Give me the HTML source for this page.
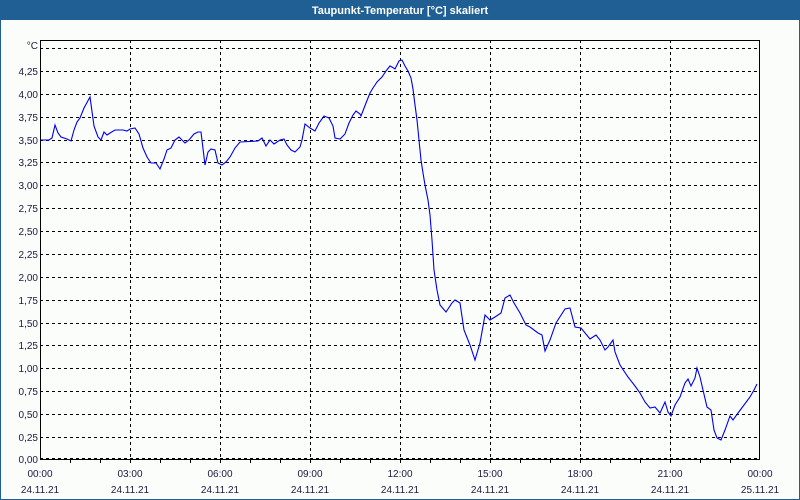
<!DOCTYPE html>
<html><head><meta charset="utf-8"><style>
body{margin:0;width:800px;height:500px;overflow:hidden;background:#fbfdfb;font-family:"Liberation Sans","DejaVu Sans",sans-serif}
</style></head><body>
<svg width="800" height="500" xmlns="http://www.w3.org/2000/svg" style="position:absolute;left:0;top:0">
<rect x="0" y="0" width="800" height="500" fill="#fbfdfb"/>
<rect x="0" y="0" width="800" height="20" fill="#1f5f94"/>
<rect x="0.5" y="0.5" width="799" height="499" fill="none" stroke="#1f5f94"/>
<text x="400" y="14" fill="#fff" font-size="11" font-weight="bold" text-anchor="middle">Taupunkt-Temperatur [°C] skaliert</text>
<g stroke="#000" stroke-dasharray="3,3" stroke-width="1">
<line x1="40" x2="760" y1="48.5" y2="48.5"/><line x1="40" x2="760" y1="71.5" y2="71.5"/><line x1="40" x2="760" y1="94.5" y2="94.5"/><line x1="40" x2="760" y1="117.5" y2="117.5"/><line x1="40" x2="760" y1="140.5" y2="140.5"/><line x1="40" x2="760" y1="162.5" y2="162.5"/><line x1="40" x2="760" y1="185.5" y2="185.5"/><line x1="40" x2="760" y1="208.5" y2="208.5"/><line x1="40" x2="760" y1="231.5" y2="231.5"/><line x1="40" x2="760" y1="254.5" y2="254.5"/><line x1="40" x2="760" y1="277.5" y2="277.5"/><line x1="40" x2="760" y1="300.5" y2="300.5"/><line x1="40" x2="760" y1="323.5" y2="323.5"/><line x1="40" x2="760" y1="345.5" y2="345.5"/><line x1="40" x2="760" y1="368.5" y2="368.5"/><line x1="40" x2="760" y1="391.5" y2="391.5"/><line x1="40" x2="760" y1="414.5" y2="414.5"/><line x1="40" x2="760" y1="437.5" y2="437.5"/><line x1="40" x2="760" y1="458.5" y2="458.5"/>
<line y1="40" y2="460" x1="130.5" x2="130.5"/><line y1="40" y2="460" x1="220.5" x2="220.5"/><line y1="40" y2="460" x1="310.5" x2="310.5"/><line y1="40" y2="460" x1="400.5" x2="400.5"/><line y1="40" y2="460" x1="490.5" x2="490.5"/><line y1="40" y2="460" x1="580.5" x2="580.5"/><line y1="40" y2="460" x1="670.5" x2="670.5"/>
</g>
<rect x="40.5" y="40.5" width="719" height="419" fill="none" stroke="#000"/>
<g stroke="#000">
<path d="M70.5 460v3M100.5 460v3M130.5 460v3M160.5 460v3M190.5 460v3M220.5 460v3M250.5 460v3M280.5 460v3M310.5 460v3M340.5 460v3M370.5 460v3M400.5 460v3M430.5 460v3M460.5 460v3M490.5 460v3M520.5 460v3M550.5 460v3M580.5 460v3M610.5 460v3M640.5 460v3M670.5 460v3M700.5 460v3M730.5 460v3"/>
</g>
<polyline fill="none" stroke="#0000ee" stroke-width="1.1" points="41,140 49,140 52,138 55,125 58,133 61,137 67,139 71,141 74,130 77,122 80,118 84,108 90,97 94,126 98,137 101,140 104,132 107,135 110,133 115,130 123,130 127,131 130,129 135,128 139,134 143,148 147,157 151,163 156,163 160,169 164,159 167,150 171,148 175,140 179,137 182,140 185,143 189,140 194,134 198,132 201,132 205,165 208,152 211,149 215,150 218,163 222,165 226,162 230,157 235,148 240,142 258,141 262,138 266,146 270,140 274,144 280,140 284,139 287,145 291,150 295,152 300,147 302,140 305,124 310,128 315,131 319,123 324,116 329,118 333,126 335,138 340,139 345,134 349,123 353,115 356,111 360,114 361,116 366,103 370,93 373,88 377,82 382,77 386,71 390,66 392,67 395,69 399,61 402,60 405,66 408,71 411,78 413,89 415,105 417,120 419,140 421,160 423,173 425,185 428,200 430,215 432,240 434,270 437,290 440,305 446,312 452,303 455,300 460,303 464,330 470,345 475,360 480,343 485,315 490,320 495,317 501,313 505,298 510,295 514,303 520,313 526,325 530,327 538,333 542,335 545,351 550,340 556,323 565,309 570,308 575,327 581,328 590,339 596,335 600,340 605,350 608,347 613,340 615,352 620,365 628,377 635,386 640,393 645,402 650,408 655,407 660,413 665,402 668,412 671,416 675,405 680,397 685,383 688,379 691,386 695,378 697,368 700,377 703,390 707,407 711,410 714,430 717,438 721,440 725,430 730,416 733,420 738,413 744,405 750,397 754,390 757,384"/>
<g font-size="10" fill="#1a1a40" text-anchor="end">
<text x="38" y="49">°C</text>
<text x="38" y="75">4,25</text><text x="38" y="98">4,00</text><text x="38" y="121">3,75</text><text x="38" y="144">3,50</text><text x="38" y="166">3,25</text><text x="38" y="189">3,00</text><text x="38" y="212">2,75</text><text x="38" y="235">2,50</text><text x="38" y="258">2,25</text><text x="38" y="281">2,00</text><text x="38" y="304">1,75</text><text x="38" y="327">1,50</text><text x="38" y="349">1,25</text><text x="38" y="372">1,00</text><text x="38" y="395">0,75</text><text x="38" y="418">0,50</text><text x="38" y="441">0,25</text><text x="38" y="463">0,00</text>
</g>
<g font-size="10" fill="#1a1a40" text-anchor="middle">
<text x="40" y="477">00:00</text><text x="130" y="477">03:00</text><text x="220" y="477">06:00</text><text x="310" y="477">09:00</text><text x="400" y="477">12:00</text><text x="490" y="477">15:00</text><text x="580" y="477">18:00</text><text x="670" y="477">21:00</text><text x="760" y="477">00:00</text>
<text x="40" y="493">24.11.21</text><text x="130" y="493">24.11.21</text><text x="220" y="493">24.11.21</text><text x="310" y="493">24.11.21</text><text x="400" y="493">24.11.21</text><text x="490" y="493">24.11.21</text><text x="580" y="493">24.11.21</text><text x="670" y="493">24.11.21</text><text x="760" y="493">25.11.21</text>
</g>
</svg>
</body></html>
